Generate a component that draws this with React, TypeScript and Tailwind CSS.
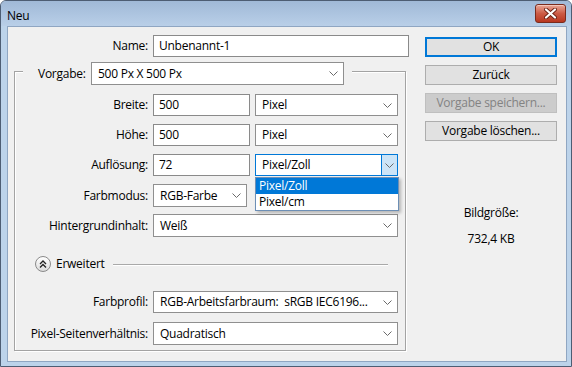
import React from "react";

function Chevron() {
  return (
    <svg width="9" height="5" viewBox="0 0 9 5" className="shrink-0">
      <path d="M0.5 0.5 L4.5 4.5 L8.5 0.5" fill="none" stroke="#6a6a6a" strokeWidth="1" />
    </svg>
  );
}

function Select({ value, className = "", focused = false }: { value: string; className?: string; focused?: boolean }) {
  return (
    <div
      className={`flex h-[22px] items-center bg-white border ${
        focused ? "border-[#0078d7]" : "border-[#8f8f8f]"
      } ${className}`}>
      <span className="flex-1 truncate pl-[6px] whitespace-pre">{value}</span>
      {focused ? (
        <div className="flex h-full w-[16px] items-center justify-center border-l border-[#0078d7] bg-[#cce4f7]">
          <Chevron />
        </div>
      ) : (
        <div className="flex pr-[5px]">
          <Chevron />
        </div>
      )}
    </div>
  );
}

function Input({ value, className = "" }: { value: string; className?: string }) {
  return (
    <div className={`flex h-[22px] items-center border border-[#8a8a8a] bg-white pl-[5px] ${className}`}>
      {value}
    </div>
  );
}

function Row({ label, children, className = "" }: { label: string; children: React.ReactNode; className?: string }) {
  return (
    <div className={`flex items-center ${className}`}>
      <span className="w-[138px] shrink-0 pr-[5px] text-right">{label}</span>
      {children}
    </div>
  );
}

function Button({ label, primary = false, disabled = false }: { label: string; primary?: boolean; disabled?: boolean }) {
  let cls = "bg-[#e1e1e1] border border-[#adadad] text-black";
  if (primary) cls = "bg-[#e1e1e1] border-2 border-[#0078d7] text-black";
  if (disabled) cls = "bg-[#cccccc] border border-[#bfbfbf] text-[#838383]";
  return <div className={`flex h-[20px] items-center justify-center ${cls}`}>{label}</div>;
}

export default function App() {
  return (
    <div className="h-[367px] w-[572px] font-['Open_Sans',sans-serif] text-[12px] leading-[16px] tracking-[-0.25px] text-black">
      <div className="flex h-full w-full flex-col rounded-t-[6px] border border-[#4d5d73] bg-[#bcd3ea]">
        {/* title bar */}
        <div className="flex h-[25px] shrink-0 rounded-t-[5px] bg-gradient-to-b from-[#a0b9d7] to-[#b9cfe8]">
          <span className="ml-[6px] mt-[7px]">Neu</span>
          <div className="ml-auto mr-[5px] mt-[3px] flex h-[19px] w-[31px] items-center justify-center rounded-[3px] border border-[#7a2b1d] bg-gradient-to-b from-[#e8a596] via-[#cc5b45] to-[#b8361f] shadow-[inset_0_1px_0_#f3c6bb]">
            <svg width="13" height="11" viewBox="0 0 13 11">
              <path d="M2 1.5 L11 9.5 M11 1.5 L2 9.5" stroke="#6b2114" strokeWidth="4" strokeLinecap="round" />
              <path d="M2 1.5 L11 9.5 M11 1.5 L2 9.5" stroke="#ffffff" strokeWidth="2.2" strokeLinecap="round" />
            </svg>
          </div>
        </div>

        {/* client area */}
        <div className="mb-[4px] ml-[6px] mr-[4px] flex flex-1 border border-[#8fa6c2] bg-[#f0f0f0]">
          {/* left column */}
          <div className="w-[402px] shrink-0 pt-[8px]">
            <div className="flex items-center">
              <span className="w-[145px] shrink-0 pr-[5px] text-right">Name:</span>
              <Input value="Unbenannt-1" className="w-[256px]" />
            </div>

            <div className="ml-[6px] mt-[14px] w-[392px] border border-[#a3a3a3] pb-[5px] shadow-[inset_1px_1px_0_#ffffff,1px_1px_0_#ffffff]">
              <div className="-mt-[10px] ml-[8px] flex w-fit items-center bg-[#f0f0f0] pl-[15px] pr-[8px]">
                <span className="w-[53px] shrink-0">Vorgabe:</span>
                <Select value="500 Px X 500 Px" className="h-[23px] w-[253px]" />
              </div>

              <Row label="Breite:" className="mt-[9px]">
                <Input value="500" className="w-[97px]" />
                <Select value="Pixel" className="ml-[5px] w-[143px]" />
              </Row>
              <Row label="Höhe:" className="mt-[8px]">
                <Input value="500" className="w-[97px]" />
                <Select value="Pixel" className="ml-[5px] w-[143px]" />
              </Row>
              <Row label="Auflösung:" className="mt-[8px]">
                <Input value="72" className="w-[97px]" />
                <div className="relative ml-[5px] w-[143px]">
                  <Select value="Pixel/Zoll" focused />
                  <div className="absolute left-0 top-[23px] z-10 w-[144px] border border-[#6d8fb5] bg-white shadow-[2px_2px_3px_rgba(0,0,0,0.25)]">
                    <div className="flex h-[16px] items-center bg-[#0078d7] pl-[3px] text-white">Pixel/Zoll</div>
                    <div className="flex h-[16px] items-center pl-[3px]">Pixel/cm</div>
                  </div>
                </div>
              </Row>
              <Row label="Farbmodus:" className="mt-[8px]">
                <Select value="RGB-Farbe" className="h-[23px] w-[94px]" />
              </Row>
              <Row label="Hintergrundinhalt:" className="mt-[7px]">
                <Select value="Weiß" className="h-[23px] w-[245px]" />
              </Row>

              <div className="mt-[19px] flex h-[16px] items-center">
                <div className="ml-[20px] flex h-[16px] w-[16px] items-center justify-center rounded-full border border-[#8a8a8a] bg-gradient-to-b from-[#ffffff] to-[#dcdcdc]">
                  <svg width="8" height="8" viewBox="0 0 8 8">
                    <path d="M1 4 L4 1 L7 4 M1 7.5 L4 4.5 L7 7.5" fill="none" stroke="#222" strokeWidth="1.3" />
                  </svg>
                </div>
                <span className="ml-[5px] w-[51px]">Erweitert</span>
                <div className="ml-[6px] h-px w-[275px] bg-[#a9a9a9] shadow-[0_1px_0_#ffffff]" />
              </div>

              <Row label="Farbprofil:" className="mt-[19px]">
                <Select value="RGB-Arbeitsfarbraum:  sRGB IEC6196..." className="w-[245px]" />
              </Row>
              <Row label="Pixel-Seitenverhältnis:" className="mt-[9px]">
                <Select value="Quadratisch" className="h-[23px] w-[245px]" />
              </Row>
            </div>
          </div>

          {/* right column */}
          <div className="ml-[15px] flex w-[132px] shrink-0 flex-col pt-[10px]">
            <div className="flex flex-col gap-[8px]">
              <Button label="OK" primary />
              <Button label="Zurück" />
              <Button label="Vorgabe speichern..." disabled />
              <Button label="Vorgabe löschen..." />
            </div>
            <div className="mt-[64px] text-center">Bildgröße:</div>
            <div className="mt-[10px] text-center">732,4 KB</div>
          </div>
        </div>
      </div>
    </div>
  );
}
